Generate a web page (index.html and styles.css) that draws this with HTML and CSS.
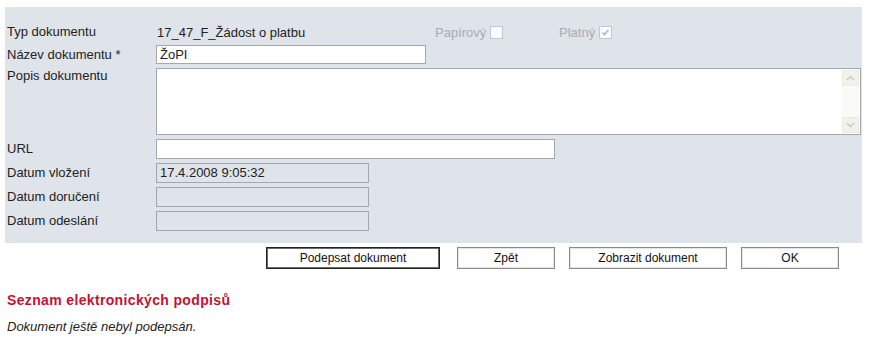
FILE: index.html
```html
<!DOCTYPE html>
<html lang="cs">
<head>
<meta charset="utf-8">
<title>Dokument</title>
<link rel="stylesheet" href="styles.css">
</head>
<body>
<div class="panel">
  <div class="form">
    <div class="label">Typ dokumentu</div>
    <div class="row1">
      <span class="typ">17_47_F_Žádost o platbu</span>
      <span class="chk chk-papir">Papírový <span class="box"></span></span>
      <span class="chk">Platný <span class="box"><svg width="11" height="11" viewBox="0 0 11 11"><polyline points="2.5,5.5 4.5,7.5 8.5,3" fill="none" stroke="#b4b8bc" stroke-width="1.6"/></svg></span></span>
    </div>

    <div class="label">Název dokumentu *</div>
    <div class="cell"><input class="field w-nazev" type="text" value="ŽoPI"></div>

    <div class="label label-top">Popis dokumentu</div>
    <div class="memo">
      <textarea class="memo-text"></textarea>
      <div class="sb">
        <div class="sb-btn"><svg width="9" height="6" viewBox="0 0 9 6"><polyline points="1,5 4.5,1.5 8,5" fill="none" stroke="#c8c8c0" stroke-width="1.4"/></svg></div>
        <div class="sb-track"></div>
        <div class="sb-btn"><svg width="9" height="6" viewBox="0 0 9 6"><polyline points="1,1 4.5,4.5 8,1" fill="none" stroke="#c8c8c0" stroke-width="1.4"/></svg></div>
      </div>
    </div>

    <div class="label">URL</div>
    <div class="cell"><input class="field w-url" type="text" value=""></div>

    <div class="label">Datum vložení</div>
    <div class="cell"><div class="ro">17.4.2008 9:05:32</div></div>

    <div class="label">Datum doručení</div>
    <div class="cell"><div class="ro"></div></div>

    <div class="label">Datum odeslání</div>
    <div class="cell"><div class="ro"></div></div>
  </div>
</div>

<div class="buttons">
  <button class="btn btn-default btn-sign">Podepsat dokument</button>
  <button class="btn btn-back">Zpět</button>
  <button class="btn btn-show">Zobrazit dokument</button>
  <button class="btn btn-ok">OK</button>
</div>

<h2 class="heading">Seznam elektronických podpisů</h2>
<p class="note">Dokument ještě nebyl podepsán.</p>
</body>
</html>
```

FILE: styles.css
```css
html, body {
  margin: 0;
  padding: 0;
  background: #ffffff;
}

body {
  font-family: "Liberation Sans", Arial, sans-serif;
  font-size: 13px;
  color: #222;
}

.panel {
  margin: 7px 0 0 5px;
  width: 857px;
  background: #dfe4ea;
}

.form {
  display: grid;
  grid-template-columns: 149px 1fr;
  grid-template-rows: 18px 19px 67px 20px 20px 20px 20px;
  row-gap: 4px;
  padding: 16px 1px 12px 2px;
  align-items: center;
}

.label {
  line-height: 16px;
  color: #222;
  white-space: nowrap;
}

.label-top {
  align-self: start;
  line-height: 16px;
  padding-top: 0;
}

.cell {
  height: 100%;
  display: flex;
  align-items: stretch;
}

.row1 {
  display: flex;
  align-items: center;
  height: 100%;
}

.typ {
  width: 279px;
  padding-left: 1px;
  box-sizing: border-box;
  white-space: nowrap;
}

.chk {
  display: flex;
  align-items: center;
  gap: 4px;
  color: #a8acb0;
  white-space: nowrap;
}

.chk-papir {
  width: 124px;
}

.box {
  width: 13px;
  height: 13px;
  box-sizing: border-box;
  border: 1px solid #c4c8cc;
  background: #fbfbfb;
  display: flex;
  align-items: center;
  justify-content: center;
}

.field {
  box-sizing: border-box;
  height: 100%;
  margin: 0;
  border: 1px solid #a4a8ac;
  background: #ffffff;
  font-family: "Liberation Sans", Arial, sans-serif;
  font-size: 13px;
  color: #222;
  padding: 0 3px;
  outline: none;
}

.w-nazev {
  width: 270px;
}

.w-url {
  width: 399px;
}

.memo {
  box-sizing: border-box;
  height: 100%;
  width: 705px;
  border: 1px solid #a4a8ac;
  background: #ffffff;
  display: flex;
}

.memo-text {
  flex: 1;
  border: none;
  margin: 0;
  padding: 2px 3px;
  resize: none;
  overflow: hidden;
  outline: none;
  font-family: "Liberation Sans", Arial, sans-serif;
  font-size: 13px;
}

.sb {
  width: 17px;
  margin: 1px 1px 1px 0;
  display: flex;
  flex-direction: column;
  background: #fafaf6;
}

.sb-btn {
  height: 16px;
  background: #f2f2ec;
  border: 1px solid #ececE4;
  box-sizing: border-box;
  display: flex;
  align-items: center;
  justify-content: center;
}

.sb-track {
  flex: 1;
}

.ro {
  box-sizing: border-box;
  width: 213px;
  height: 100%;
  border: 1px solid #a4a8ac;
  background: #dfe4ea;
  padding: 0 3px;
  line-height: 18px;
  color: #222;
  white-space: nowrap;
}

.buttons {
  display: flex;
  margin-top: 4px;
  padding-left: 266px;
  height: 22px;
}

.btn {
  box-sizing: border-box;
  height: 22px;
  margin: 0;
  padding: 0;
  background: #ffffff;
  border: 1px solid #8a8a8a;
  box-shadow: inset 0 0 0 1px #e6e6e6;
  font-family: "Liberation Sans", Arial, sans-serif;
  font-size: 12px;
  color: #111;
  cursor: pointer;
}

.btn-default {
  border: 1px solid #222;
  box-shadow: inset 0 0 0 1px #6a6a6a;
}

.btn-sign {
  width: 174px;
}

.btn-back {
  width: 98px;
  margin-left: 17px;
}

.btn-show {
  width: 158px;
  margin-left: 14px;
}

.btn-ok {
  width: 98px;
  margin-left: 14px;
}

.heading {
  margin: 23px 0 0 7px;
  font-size: 14px;
  line-height: 16px;
  font-weight: bold;
  letter-spacing: 0.35px;
  color: #c4122f;
}

.note {
  margin: 11px 0 0 7px;
  font-size: 13px;
  line-height: 15px;
  font-style: italic;
  color: #222;
}
```
